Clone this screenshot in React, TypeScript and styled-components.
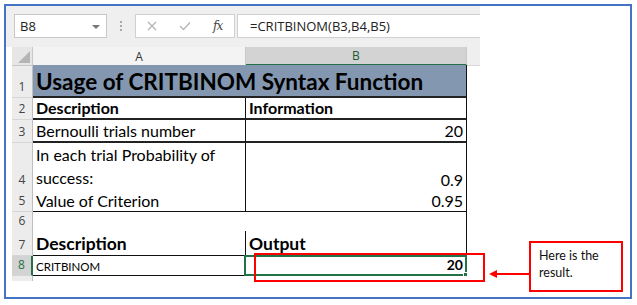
import React from "react";
import styled, { createGlobalStyle } from "styled-components";

const Global = createGlobalStyle`
  html, body { margin: 0; padding: 0; background: #ffffff; }
  body { font-family: Lato, "Liberation Sans", sans-serif; color: #000; }
  * { box-sizing: border-box; }
`;

const Frame = styled.div`
  position: relative;
  margin: 4px 0 0 4px;
  width: 628px;
  height: 295px;
  border: 2px solid #4472c4;
  display: flex;
  background: #fff;
`;

const Excel = styled.div`
  width: 474px;
  display: flex;
  flex-direction: column;
`;

const Toolbar = styled.div`
  height: 41px;
  background: #efefef;
  display: flex;
  align-items: flex-start;
  padding: 8px 0 0 8px;
`;

const NameBox = styled.div`
  width: 93px;
  height: 24px;
  background: #fff;
  border: 1px solid #c8c8c8;
  display: flex;
  align-items: center;
  justify-content: space-between;
  padding: 0 6px 0 5px;
  font-family: "Open Sans", Lato, sans-serif;
  font-size: 13px;
  color: #222;
`;

const Caret = styled.span`
  width: 0;
  height: 0;
  border-left: 4px solid transparent;
  border-right: 4px solid transparent;
  border-top: 4px solid #777;
  margin-top: 1px;
`;

const Sep = styled.div`
  width: 28px;
  height: 24px;
  display: flex;
  flex-direction: column;
  align-items: center;
  justify-content: center;
  gap: 2px;
`;

const Dot = styled.span`
  width: 2px;
  height: 2px;
  background: #a8a8a8;
`;

const FxBox = styled.div`
  width: 100px;
  height: 24px;
  background: #fff;
  border: 1px solid #d0d0d0;
  display: flex;
  align-items: center;
  padding-left: 11px;
  gap: 22px;
`;

const FxText = styled.span`
  font-family: "DejaVu Serif", "Liberation Serif", serif;
  font-style: italic;
  font-size: 12px;
  color: #444;
  letter-spacing: -1px;
`;

const Formula = styled.div`
  flex: 1;
  height: 24px;
  margin-left: 2px;
  background: #fff;
  border: 1px solid #d0d0d0;
  border-right: none;
  display: flex;
  align-items: center;
  padding-left: 12px;
  font-family: "Open Sans", Lato, sans-serif;
  font-size: 13px;
  color: #222;
`;

const HeadRow = styled.div`
  height: 18px;
  display: grid;
  grid-template-columns: 6px 21px 213px 221px 13px;
  background: #fff;
`;

const Blank = styled.div``;

const Corner = styled.div`
  background: #e6e6e6;
  border-right: 1px solid #c8c8c8;
  border-bottom: 1px solid #c8c8c8;
  position: relative;
  overflow: hidden;
`;

const CornerTri = styled.div`
  position: absolute;
  right: 2px;
  bottom: 2px;
  width: 0;
  height: 0;
  border-left: 12px solid transparent;
  border-bottom: 12px solid #b5b5b5;
`;

const ColHead = styled.div<{ $sel?: boolean }>`
  background: ${(p) => (p.$sel ? "#d3d3d3" : "#f3f3f3")};
  border-right: 1px solid #c8c8c8;
  border-bottom: ${(p) => (p.$sel ? "2px solid #217346" : "1px solid #c8c8c8")};
  display: flex;
  align-items: center;
  justify-content: center;
  font-family: "Open Sans", Lato, sans-serif;
  font-size: 12px;
  color: ${(p) => (p.$sel ? "#1e5a36" : "#333")};
`;

const Tail = styled.div`
  background: #efefef;
  border-bottom: 1px solid #d8d8d8;
`;

const Row = styled.div<{ $h: number }>`
  height: ${(p) => p.$h}px;
  display: grid;
  grid-template-columns: 6px 21px 213px 221px;
`;

const RowHead = styled.div<{ $sel?: boolean }>`
  background: ${(p) => (p.$sel ? "#d3d3d3" : "#ececec")};
  border-right: ${(p) => (p.$sel ? "2px solid #217346" : "1px solid #bfbfbf")};
  border-bottom: 1px solid #d6d6d6;
  display: flex;
  align-items: flex-end;
  justify-content: center;
  padding-bottom: 2px;
  font-family: "Open Sans", Lato, sans-serif;
  font-size: 12px;
  color: ${(p) => (p.$sel ? "#217346" : "#444")};
`;

type CellProps = {
  $right?: boolean;
  $bold?: boolean;
  $size?: number;
  $bg?: string;
  $span?: boolean;
  $bb?: string;
  $br?: string;
};

const Cell = styled.div<CellProps>`
  position: relative;
  grid-column: ${(p) => (p.$span ? "span 2" : "auto")};
  background: ${(p) => p.$bg || "#fff"};
  border-right: ${(p) => p.$br || "1px solid #111"};
  border-bottom: ${(p) => p.$bb || "1px solid #111"};
  display: flex;
  align-items: flex-end;
  justify-content: ${(p) => (p.$right ? "flex-end" : "flex-start")};
  padding: 0 3px 1px 3px;
  font-size: ${(p) => p.$size || 16}px;
  font-weight: ${(p) => (p.$bold ? 700 : 400)};
  line-height: 1.2;
  white-space: nowrap;
`;

const Wrap = styled.div`
  display: flex;
  flex-direction: column;
  line-height: 23px;
`;

const Selected = styled.div`
  position: absolute;
  left: -2px;
  top: -1px;
  right: -1px;
  bottom: -1px;
  border: 2px solid #217346;
  pointer-events: none;
`;

const Handle = styled.div`
  position: absolute;
  right: -3px;
  bottom: -3px;
  width: 5px;
  height: 5px;
  background: #217346;
  border: 1px solid #fff;
`;

const FootRow = styled.div`
  height: 5px;
  display: grid;
  grid-template-columns: 6px 21px;
`;

const FootHead = styled.div`
  background: #ececec;
  border-right: 1px solid #bfbfbf;
`;

const RedBox = styled.div`
  position: absolute;
  left: 248px;
  top: 247px;
  width: 231px;
  height: 29px;
  border: 2px solid #ff0000;
`;

const ArrowSvg = styled.svg`
  position: absolute;
  left: 480px;
  top: 256px;
`;

const Callout = styled.div`
  position: absolute;
  left: 523px;
  top: 235px;
  width: 94px;
  height: 51px;
  border: 2px solid #ff0000;
  background: #fff;
  padding: 4px 0 0 8px;
  font-size: 12.5px;
  line-height: 17px;
  color: #111;
`;

export default function App() {
  return (
    <>
      <Global />
      <Frame>
        <Excel>
          <Toolbar>
            <NameBox>
              B8
              <Caret />
            </NameBox>
            <Sep>
              <Dot />
              <Dot />
              <Dot />
            </Sep>
            <FxBox>
              <svg width="10" height="10" viewBox="0 0 10 10">
                <path d="M1 1 L9 9 M9 1 L1 9" stroke="#b4b4b4" strokeWidth="1.2" fill="none" />
              </svg>
              <svg width="12" height="10" viewBox="0 0 12 10">
                <path d="M1 5 L4.5 8.5 L11 1.5" stroke="#b4b4b4" strokeWidth="1.3" fill="none" />
              </svg>
              <FxText>fx</FxText>
            </FxBox>
            <Formula>=CRITBINOM(B3,B4,B5)</Formula>
          </Toolbar>
          <HeadRow>
            <Blank />
            <Corner>
              <CornerTri />
            </Corner>
            <ColHead>A</ColHead>
            <ColHead $sel>B</ColHead>
            <Tail />
          </HeadRow>
          <Row $h={33}>
            <Blank />
            <RowHead>1</RowHead>
            <Cell $span $bold $size={22.5} $bg="#8497b0" $bb="2px solid #222">
              Usage of CRITBINOM Syntax Function
            </Cell>
          </Row>
          <Row $h={22}>
            <Blank />
            <RowHead>2</RowHead>
            <Cell $bold $bb="2px solid #222">Description</Cell>
            <Cell $bold $bb="2px solid #222">Information</Cell>
          </Row>
          <Row $h={23}>
            <Blank />
            <RowHead>3</RowHead>
            <Cell $bb="2px solid #222">Bernoulli trials number</Cell>
            <Cell $right $bb="2px solid #222">20</Cell>
          </Row>
          <Row $h={47}>
            <Blank />
            <RowHead>4</RowHead>
            <Cell>
              <Wrap>
                <span>In each trial Probability of</span>
                <span>success:</span>
              </Wrap>
            </Cell>
            <Cell $right>0.9</Cell>
          </Row>
          <Row $h={22}>
            <Blank />
            <RowHead>5</RowHead>
            <Cell>Value of Criterion</Cell>
            <Cell $right>0.95</Cell>
          </Row>
          <Row $h={19}>
            <Blank />
            <RowHead>6</RowHead>
            <Cell $br="none" />
            <Cell />
          </Row>
          <Row $h={25}>
            <Blank />
            <RowHead>7</RowHead>
            <Cell $bold $size={17.5}>Description</Cell>
            <Cell $bold $size={17.5}>Output</Cell>
          </Row>
          <Row $h={20}>
            <Blank />
            <RowHead $sel>8</RowHead>
            <Cell $size={11.5}>CRITBINOM</Cell>
            <Cell $right $bold $size={14}>
              20
              <Selected>
                <Handle />
              </Selected>
            </Cell>
          </Row>
          <FootRow>
            <Blank />
            <FootHead />
          </FootRow>
        </Excel>
        <RedBox />
        <ArrowSvg width="50" height="24" viewBox="0 0 50 24">
          <path d="M49 12 L10 12" stroke="#ff0000" strokeWidth="2" fill="none" />
          <path d="M3 12 L11 8 L11 16 Z" fill="#ff0000" />
        </ArrowSvg>
        <Callout>
          Here is the
          <br />
          result.
        </Callout>
      </Frame>
    </>
  );
}
